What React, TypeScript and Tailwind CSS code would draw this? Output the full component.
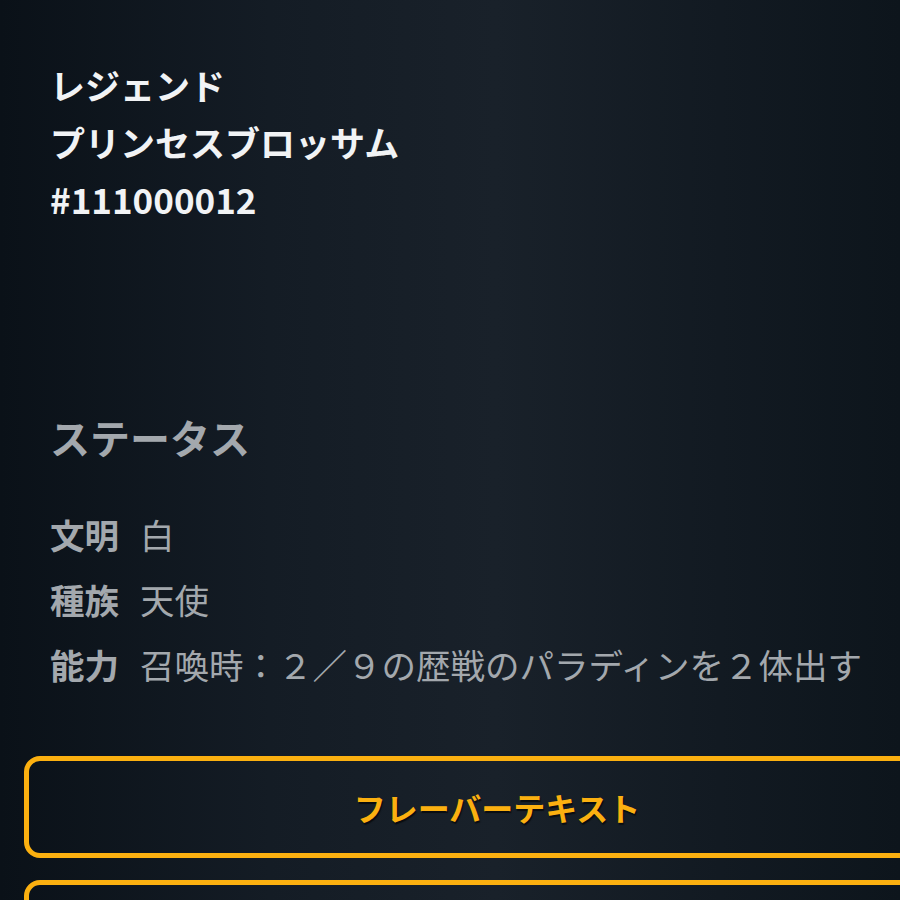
const rows = [
  { label: "文明", value: "白" },
  { label: "種族", value: "天使" },
  { label: "能力", value: "召喚時：２／９の歴戦のパラディンを２体出す" },
];

export default function App() {
  return (
    <div
      className="h-[900px] w-[900px] overflow-hidden bg-[linear-gradient(90deg,#0a1118_0%,#141c25_30%,#19212a_55%,#121a22_80%,#0d151c_100%)] text-white"
      style={{ fontFamily: '"Noto Sans CJK JP", "Noto Sans", sans-serif' }}
    >
      {/* card header */}
      <div className="pl-[50px] pt-[56px] text-[35px] font-bold leading-[57px] text-[#f1f3f5]">
        <div>レジェンド</div>
        <div>プリンセスブロッサム</div>
        <div>#111000012</div>
      </div>

      {/* status */}
      <section className="mt-[180px] pl-[50px]">
        <h2 className="text-[40px] font-bold leading-[60px] text-[#a3a8ad]">ステータス</h2>
        <dl className="mt-[35px] flex flex-col text-[34.5px] leading-[65px] text-[#a3a8ad]">
          {rows.map((r) => (
            <div key={r.label} className="flex gap-[21px]">
              <dt className="font-bold">{r.label}</dt>
              <dd>{r.value}</dd>
            </div>
          ))}
        </dl>
      </section>

      <div className="mt-[59px] flex flex-col gap-[22px] pl-[24px]">
        <button className="flex h-[102px] w-[946px] shrink-0 items-center justify-center rounded-[16px] border-[5px] border-[#fbb010] text-[32px] font-bold text-[#fbb010] [text-shadow:_1px_2px_1px_rgb(0_0_0_/_60%)]">
          フレーバーテキスト
        </button>
        <button className="h-[102px] w-[946px] shrink-0 rounded-[16px] border-[5px] border-[#fbb010]" />
      </div>
    </div>
  );
}
